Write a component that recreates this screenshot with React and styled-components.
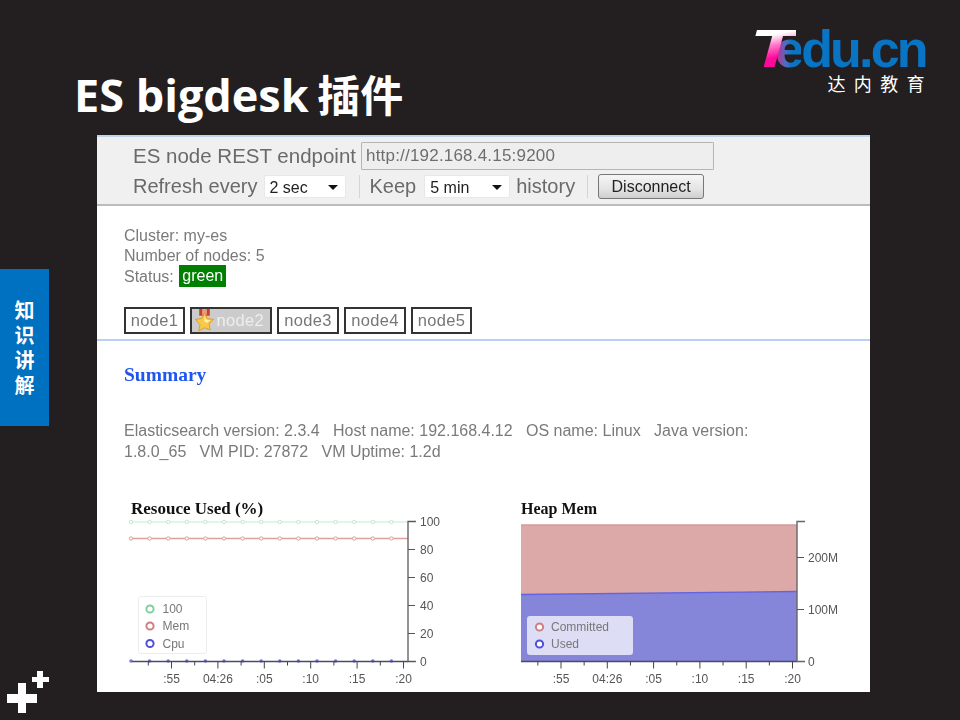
import React from "react";
import styled, { createGlobalStyle } from "styled-components";

const Global = createGlobalStyle`
  html, body { margin: 0; padding: 0; background: #231f20; }
`;
const Slide = styled.div`
  width: 960px; height: 720px; overflow: hidden; background: #231f20;
  display: grid; grid-template-columns: 97px 773px 90px; grid-template-rows: 135px 557px 28px;
  font-family: "Liberation Sans", Arial, sans-serif;
`;
const Header = styled.header`
  grid-column: 1 / 4; display: flex; justify-content: space-between; align-items: flex-start;
  padding: 0 35px 0 74px;
`;
const Title = styled.h1`
  margin: 65px 0 0; color: #fff; font: 700 45px/56px "Open Sans", "Noto Sans CJK SC", sans-serif; white-space: nowrap;
  span { font-family: "Noto Sans CJK SC", sans-serif; font-weight: 700; font-size: 43px; margin-left: -3px; }
`;
const Logo = styled.div`
  margin-top: 22px; width: 175px; display: flex; flex-direction: column; align-items: flex-end;
`;
const LogoWord = styled.div`
  font: 700 52px/52px "Liberation Sans", sans-serif; letter-spacing: -2.8px; color: #0a74c4; white-space: nowrap; width: 175px;
`;
const LogoT = styled.b`
  display: inline-block; font-size: 54px; font-style: italic; letter-spacing: 0; margin-right: -8px;
  transform: scaleX(1.4); transform-origin: left center;
  background: linear-gradient(165deg, #fff 0%, #fff 28%, #ff7ccb 45%, #ff0a9c 66%, #f0089a 100%);
  -webkit-background-clip: text; background-clip: text; color: transparent;
`;
const LogoE = styled.span`
  background: linear-gradient(90deg, #e0208f 0%, #4a6fc0 42%, #0a74c4 65%);
  -webkit-background-clip: text; background-clip: text; color: transparent;
`;
const LogoSub = styled.div`
  margin-top: -3px; color: #fff; font: 400 18px/22px "Noto Sans CJK SC", sans-serif; letter-spacing: 8.4px; margin-right: -8px;
`;
const Rail = styled.aside`
  grid-column: 1; grid-row: 2 / 4; display: flex; flex-direction: column; align-items: flex-start; padding-top: 134px; padding-bottom: 7px;
`;
const Tab = styled.div`
  width: 49px; height: 157px; background: #0070c0; color: #fff; display: flex; align-items: center; justify-content: center;
  font: 700 20px/25px "Noto Sans CJK SC", sans-serif; padding-bottom: 2px; box-sizing: border-box;
  span { width: 20px; word-break: break-all; }
`;
const Plus = styled.svg`
  margin-top: auto; margin-left: 7px; display: block;
`;
const Shot = styled.main`
  grid-column: 2; grid-row: 2; background: #fff; overflow: hidden; color: #757575; filter: blur(0.3px);
`;
const Toolbar = styled.div`
  height: 71px; box-sizing: border-box; background: #f0f0f0; border-top: 2px solid #c0d4ea; border-bottom: 2px solid #bcbcbc; padding: 5px 0 0 36px;
  display: flex; flex-direction: column; gap: 2px; color: #6a6a6a; font-size: 20px;
`;
const ToolRow = styled.div`
  display: flex; align-items: center; height: 28px; white-space: nowrap;
`;
const EndpointLabel = styled.span`
  font-size: 20.5px;
`;
const UrlBox = styled.div`
  width: 353px; height: 28px; box-sizing: border-box; margin-left: 5px; border: 1px solid #b5b5b5; background: #eeeeee; color: #6e6e6e;
  font: 17px/26px "Liberation Sans", sans-serif; padding-left: 4px; letter-spacing: 0.2px; border-radius: 1px;
`;
const Select = styled.div`
  width: ${p => p.$w}px; height: 23px; margin: 0 6px 0 ${p => p.$ml}px; box-sizing: border-box; background: #fff; color: #222; border-radius: 2px;
  font-size: 16px; line-height: 24px; padding-left: 5px; position: relative; border: 1px solid #e8e8e8;
  &::after { content: ""; position: absolute; right: 7px; top: 9px; border: 5px solid transparent; border-top: 5px solid #111; border-bottom: 0; }
`;
const Sep = styled.i`
  display: block; width: 1px; height: 23px; background: #d4d4d4; margin: ${p => p.$m};
`;
const Button = styled.div`
  width: 106px; height: 25px; box-sizing: border-box; border: 1px solid #777; border-radius: 3px; color: #222; text-align: center;
  background: linear-gradient(#f6f6f6, #e4e4e4 60%, #cfcfcf); font-size: 16px; line-height: 24px;
`;
const Info = styled.section`
  padding: 19.5px 0 0 27px; font-size: 16px; line-height: 20.5px; color: #7a7a7a;
`;
const Badge = styled.span`
  display: inline-block; background: #008000; color: #fff; padding: 0 3px; line-height: 22px; margin: -2px 0 0 1px; vertical-align: top; font-size: 16px; height: 22px; width: 47px; box-sizing: border-box;
`;
const Tabs = styled.nav`
  display: flex; margin: 19.5px 0 0 27px; height: 27px;
`;
const NodeTab = styled.div`
  width: ${p => p.$w}px; height: 27px; box-sizing: border-box; margin-right: ${p => p.$gap}px; border: 2px solid #333;
  background: ${p => p.$active ? "#cccccc" : "#fff"}; color: ${p => p.$active ? "#eeeeee" : "#777"};
  font-size: 16.5px; letter-spacing: 0.3px; line-height: 23px; display: flex; align-items: center; white-space: nowrap;
  justify-content: ${p => p.$active ? "space-between" : "center"}; padding: ${p => p.$active ? "0 6px 0 1px" : "0"};
`;
const Rule = styled.hr`
  margin: 5px 0 0; height: 2px; border: 0; background: #b9d0f4;
`;
const Summary = styled.h2`
  margin: 22px 0 0 27px; color: #1f56f0; font: 700 19.5px/24px "Liberation Serif", serif;
`;
const Version = styled.p`
  margin: 33px 0 0 27px; width: 640px; color: #7a7a7a; font-size: 16px; line-height: 21px; white-space: pre-wrap;
`;
const Charts = styled.div`
  display: grid; grid-template-columns: 400px 330px; margin: 37px 0 0 23px;
`;
const Chart = styled.figure`
  margin: 0; display: flex; flex-direction: column;
`;
const ChartTitle = styled.figcaption`
  margin-left: ${p => p.$ml}px; color: #111; font: 700 ${p => p.$fs}px/20px "Liberation Serif", serif;
`;
const ChartSvg = styled.svg`
  display: block; margin-top: -4px; font-family: "Liberation Sans", sans-serif;
`;

const xLabels = [":55", "04:26", ":05", ":10", ":15", ":20"];

function XAxis({ x0, step, y, left, right }) {
  const ticks = [];
  for (let i = -1; i < 11; i++) {
    const x = x0 + (i * step) / 2;
    if (x < left + 4 || x > right) continue;
    ticks.push(<line key={i} x1={x} x2={x} y1={y} y2={y + (i % 2 === 0 ? 7 : 4)} stroke="#444" strokeWidth="1" />);
  }
  return (
    <g>
      <line x1={left} x2={right} y1={y} y2={y} stroke="#4a4a6a" strokeWidth="1.6" />
      {ticks}
      {xLabels.map((t, i) => (
        <text key={t} x={x0 + i * step} y={y + 21} fontSize="12" fill="#555" textAnchor="middle">{t}</text>
      ))}
    </g>
  );
}

function LegendItem({ y, color, label, x, tx }) {
  return (
    <g>
      <circle cx={x} cy={y} r="3.6" fill="#fff" stroke={color} strokeWidth="2" />
      <text x={tx} y={y + 4} fontSize="12" fill="#777">{label}</text>
    </g>
  );
}

function ResourceChart() {
  const dots = Array.from({ length: 15 }, (_, i) => 11 + i * 18.6);
  const yT = v => 140 - v * 1.4;
  return (
    <ChartSvg width="330" height="178" viewBox="0 -6 330 178">
      <line x1="12" x2="288" y1="1" y2="1" stroke="#d8efe0" strokeWidth="1.6" />
      <line x1="12" x2="288" y1="17.5" y2="17.5" stroke="#dd9f9f" strokeWidth="1.6" />
      {dots.map(x => (
        <g key={x}>
          <circle cx={x} cy="1" r="1.7" fill="#fff" stroke="#c5e6d2" />
          <circle cx={x} cy="17.5" r="1.7" fill="#fff" stroke="#dd9f9f" />
          <circle cx={x} cy="140" r="1.7" fill="#7272d8" />
        </g>
      ))}
      <XAxis x0={51.5} step={46.4} y={140.5} left={12} right={288} />
      <path d="M296 0.5H288V140.5H296" fill="none" stroke="#666" strokeWidth="1.4" />
      {[100, 80, 60, 40, 20, 0].map(v => (
        <g key={v}>
          <line x1="288" x2="295" y1={yT(v) + 0.5} y2={yT(v) + 0.5} stroke="#555" />
          <text x="300" y={yT(v) + 4.5} fontSize="12" fill="#555">{v}</text>
        </g>
      ))}
      <rect x="18.5" y="75.5" width="68" height="57" rx="2" fill="#fff" stroke="#ededed" />
      <LegendItem x={30} tx={42.5} y={88} color="#7fcf9f" label="100" />
      <LegendItem x={30} tx={42.5} y={105} color="#cf7f7f" label="Mem" />
      <LegendItem x={30} tx={42.5} y={122.5} color="#4f4fd8" label="Cpu" />
    </ChartSvg>
  );
}

function HeapChart() {
  return (
    <ChartSvg width="330" height="178" viewBox="0 -6 330 178">
      <rect x="1" y="4" width="276" height="137" fill="#dca8a8" />
      <line x1="1" x2="277" y1="4" y2="4" stroke="#d69a9a" strokeWidth="1.4" />
      <path d="M1 73.5L277 70.5V140.5H1Z" fill="#8585d9" />
      <path d="M1 73.5L277 70.5" stroke="#6464dc" strokeWidth="1.4" fill="none" />
      <XAxis x0={41} step={46.3} y={140.5} left={1} right={277} />
      <path d="M285 0.5H277V140.5H285" fill="none" stroke="#666" strokeWidth="1.4" />
      <line x1="277" x2="284" y1="36.5" y2="36.5" stroke="#555" />
      <line x1="277" x2="284" y1="88.5" y2="88.5" stroke="#555" />
      <text x="288" y="41" fontSize="12" fill="#555">200M</text>
      <text x="288" y="93" fontSize="12" fill="#555">100M</text>
      <text x="288" y="145" fontSize="12" fill="#555">0</text>
      <rect x="7" y="95" width="106" height="39" rx="3" fill="#ffffff" fillOpacity="0.72" />
      <LegendItem x={19.5} tx={31} y={106} color="#cf7f7f" label="Committed" />
      <LegendItem x={19.5} tx={31} y={123} color="#4f4fd8" label="Used" />
    </ChartSvg>
  );
}

function Medal() {
  return (
    <svg width="23" height="23" viewBox="0 0 24 24">
      <rect x="6.5" y="0" width="11" height="7" fill="#c8402c" />
      <rect x="9.5" y="0" width="5" height="6" fill="#ea9c82" />
      <path d="M12 4l2.9 6 6.6.8-4.8 4.5 1.3 6.5L12 19.6l-6 3.2 1.3-6.5L2.5 10.8l6.6-.8z" fill="#f7c948" stroke="#dc9c2c" strokeWidth="1" />
      <path d="M12 7l1.9 4.2 4.4.5-3.4 2.6-3 -1z" fill="#ffefa6" />
    </svg>
  );
}

const nodes = [
  { n: "node1", w: 61, gap: 5 },
  { n: "node2", w: 82, gap: 5, active: true },
  { n: "node3", w: 62, gap: 5 },
  { n: "node4", w: 62, gap: 5 },
  { n: "node5", w: 61, gap: 0 },
];

export default function App() {
  return (
    <Slide>
      <Global />
      <Header>
        <Title>ES bigdesk <span>插件</span></Title>
        <Logo>
          <LogoWord><LogoT>T</LogoT><LogoE>e</LogoE>du.cn</LogoWord>
          <LogoSub>达内教育</LogoSub>
        </Logo>
      </Header>
      <Rail>
        <Tab><span>知识讲解</span></Tab>
        <Plus width="42" height="42" viewBox="0 0 42 42">
          <path d="M11 12h8v11h11v9H19v10h-8V32H0v-9h11z" fill="#fff" />
          <path d="M30 0h6v6h6v5h-6v6h-6v-6h-5V6h5z" fill="#fff" />
        </Plus>
      </Rail>
      <Shot>
        <Toolbar>
          <ToolRow><EndpointLabel>ES node REST endpoint</EndpointLabel><UrlBox>http://192.168.4.15:9200</UrlBox></ToolRow>
          <ToolRow>
            Refresh every<Select $w={82} $ml={6}>2 sec</Select>
            <Sep $m="0 10px 0 7px" />Keep<Select $w={86} $ml={8}>5 min</Select>history
            <Sep $m="0 10px 0 12px" /><Button>Disconnect</Button>
          </ToolRow>
        </Toolbar>
        <Info>
          <div>Cluster: my-es</div>
          <div>Number of nodes: 5</div>
          <div>Status: <Badge>green</Badge></div>
        </Info>
        <Tabs>
          {nodes.map(t => (
            <NodeTab key={t.n} $w={t.w} $gap={t.gap} $active={t.active}>
              {t.active && <Medal />}{t.n}
            </NodeTab>
          ))}
        </Tabs>
        <Rule />
        <Summary>Summary</Summary>
        <Version>{"Elasticsearch version: 2.3.4   Host name: 192.168.4.12   OS name: Linux   Java version:\n1.8.0_65   VM PID: 27872   VM Uptime: 1.2d"}</Version>
        <Charts>
          <Chart><ChartTitle $ml={11} $fs={17}>Resouce Used (%)</ChartTitle><ResourceChart /></Chart>
          <Chart><ChartTitle $ml={1} $fs={16}>Heap Mem</ChartTitle><HeapChart /></Chart>
        </Charts>
      </Shot>
    </Slide>
  );
}
